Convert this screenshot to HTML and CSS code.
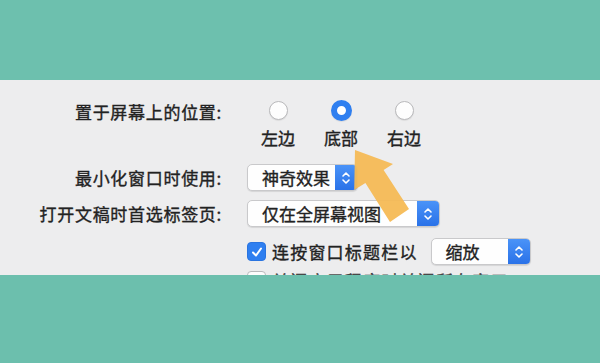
FILE: index.html
```html
<!DOCTYPE html>
<html>
<head>
<meta charset="utf-8">
<link rel="stylesheet" href="styles.css">
</head>
<body>
<div class="band top"></div>
<div class="panel">
  <div class="row r1">
    <div class="label">置于屏幕上的位置:</div>
    <div class="radios">
      <div class="opt"><span class="radio"></span><span class="cap">左边</span></div>
      <div class="opt"><span class="radio on"></span><span class="cap">底部</span></div>
      <div class="opt"><span class="radio"></span><span class="cap">右边</span></div>
    </div>
  </div>
  <div class="row r2">
    <div class="label">最小化窗口时使用:</div>
    <div class="popup w1"><span class="ptext">神奇效果</span><span class="stepper"><svg width="10" height="14" viewBox="0 0 10 14"><path d="M2 5 L5 2 L8 5 M2 9 L5 12 L8 9" fill="none" stroke="#fff" stroke-width="1.6" stroke-linecap="round" stroke-linejoin="round"/></svg></span></div>
  </div>
  <div class="row r3">
    <div class="label">打开文稿时首选标签页:</div>
    <div class="popup w2"><span class="ptext">仅在全屏幕视图</span><span class="stepper"><svg width="10" height="14" viewBox="0 0 10 14"><path d="M2 5 L5 2 L8 5 M2 9 L5 12 L8 9" fill="none" stroke="#fff" stroke-width="1.6" stroke-linecap="round" stroke-linejoin="round"/></svg></span></div>
  </div>
  <div class="row r4">
    <div class="label"></div>
    <div class="check-line">
      <span class="checkbox on"><svg width="14" height="14" viewBox="0 0 14 14"><path d="M3 7.5 L6 10.5 L11 3.5" fill="none" stroke="#fff" stroke-width="2" stroke-linecap="round" stroke-linejoin="round"/></svg></span>
      <span class="ctext">连按窗口标题栏以</span>
      <div class="popup w3"><span class="ptext">缩放</span><span class="stepper"><svg width="10" height="14" viewBox="0 0 10 14"><path d="M2 5 L5 2 L8 5 M2 9 L5 12 L8 9" fill="none" stroke="#fff" stroke-width="1.6" stroke-linecap="round" stroke-linejoin="round"/></svg></span></div>
    </div>
  </div>
  <div class="row r5">
    <div class="label"></div>
    <div class="check-line">
      <span class="checkbox"></span>
      <span class="ctext">关闭应用程序时关闭所有窗口</span>
    </div>
  </div>
  <svg class="arrow" width="600" height="363" viewBox="0 0 600 363">
    <polygon points="355,150 393,164 383.6,170 409,209 390,222 365.4,183 354.2,190" fill="#f6ba55" fill-opacity="0.95"/>
  </svg>
</div>
<div class="band bottom"></div>
</body>
</html>
```
FILE: styles.css
```css
html, body {
  margin: 0;
  padding: 0;
  width: 600px;
  height: 363px;
  overflow: hidden;
  background: #6cbfad;
  font-family: "Noto Sans CJK SC", "Noto Sans", sans-serif;
  color: #222;
}
.band.top {
  height: 80px;
  background: #6dc0ae;
}
.band.bottom {
  height: 88px;
  background: #6cbfad;
}
.panel {
  position: relative;
  height: 195px;
  background: #ededee;
  overflow: hidden;
  -webkit-text-stroke: 0.35px #222;
}
.row {
  display: grid;
  grid-template-columns: 222px auto;
  column-gap: 25px;
  align-items: center;
  font-size: 17px;
}
.label {
  text-align: right;
  font-size: 17px;
  letter-spacing: 0.7px;
  white-space: nowrap;
}
.r1 {
  padding-top: 21px;
  align-items: start;
}
.r1 .label {
  line-height: 22px;
}
.radios {
  display: flex;
  gap: 25px;
  margin-left: 12px;
}
.opt {
  display: flex;
  flex-direction: column;
  align-items: center;
  width: 38px;
  gap: 7px;
}
.radio {
  width: 19px;
  height: 19px;
  border-radius: 50%;
  background: #fdfdfd;
  border: 1px solid #b9b9bb;
  box-sizing: border-box;
  box-shadow: 0 1px 1px rgba(0,0,0,0.08);
}
.radio.on {
  border: 6px solid #2f7ff0;
  background: #fff;
  width: 21px;
  height: 21px;
  margin-top: -1px;
  margin-bottom: -1px;
}
.cap {
  font-size: 17px;
  line-height: 22px;
}
.r2 {
  margin-top: 15px;
}
.r3 {
  margin-top: 9px;
}
.r4 {
  margin-top: 11px;
}
.r5 {
  margin-top: 3px;
}
.popup {
  display: flex;
  height: 27px;
  box-sizing: border-box;
  border: 1px solid #c9c9cb;
  border-radius: 5px;
  background: #fefefe;
  box-shadow: 0 1px 1px rgba(0,0,0,0.1);
  overflow: hidden;
}
.ptext {
  flex: 1;
  padding-left: 14px;
  font-size: 17px;
  line-height: 25px;
  white-space: nowrap;
  overflow: hidden;
}
.stepper {
  width: 22px;
  display: flex;
  align-items: center;
  justify-content: center;
  background: linear-gradient(#4a93f8, #2a72e8);
}
.w1 { width: 111px; }
.w2 { width: 193px; }
.w3 { width: 100px; margin-left: 13px; }
.check-line {
  display: flex;
  align-items: center;
}
.checkbox {
  width: 19px;
  height: 19px;
  border-radius: 4px;
  box-sizing: border-box;
  border: 1px solid #b9b9bb;
  background: #fdfdfd;
  display: flex;
  align-items: center;
  justify-content: center;
}
.checkbox.on {
  background: #2f7ff0;
  border-color: #2a74e0;
}
.ctext {
  margin-left: 6px;
  font-size: 17px;
  letter-spacing: 1.2px;
}
.r5 .ctext {
  color: #555;
}
.arrow {
  position: absolute;
  left: 0;
  top: -80px;
  pointer-events: none;
}
```
